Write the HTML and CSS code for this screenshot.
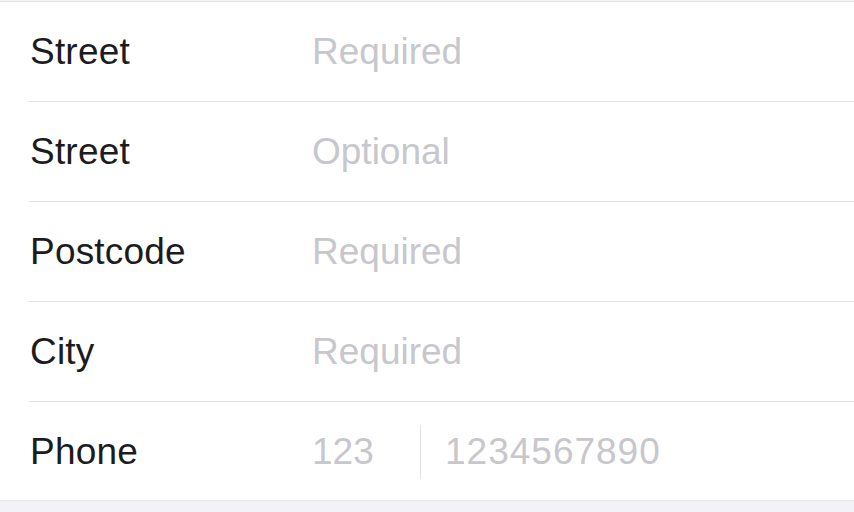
FILE: index.html
```html
<!DOCTYPE html>
<html>
<head>
<meta charset="utf-8">
<link rel="stylesheet" href="styles.css">
</head>
<body>
<div class="form">
  <div class="row">
    <div class="label">Street</div>
    <div class="value">Required</div>
  </div>
  <div class="row">
    <div class="label">Street</div>
    <div class="value">Optional</div>
  </div>
  <div class="row">
    <div class="label">Postcode</div>
    <div class="value">Required</div>
  </div>
  <div class="row">
    <div class="label">City</div>
    <div class="value">Required</div>
  </div>
  <div class="row last">
    <div class="label">Phone</div>
    <div class="value phone">
      <span class="code">123</span>
      <span class="divider"></span>
      <span class="number">1234567890</span>
    </div>
  </div>
</div>
</body>
</html>
```
FILE: styles.css
```css
html, body {
  margin: 0;
  padding: 0;
  background: #f2f2f7;
  height: 512px;
  overflow: hidden;
}
.form {
  margin-top: 1px;
  background: #ffffff;
  border-top: 1px solid #e4e4e9;
  border-bottom: 1px solid #e4e4e9;
  font-family: "Liberation Sans", Arial, sans-serif;
  font-size: 37px;
  letter-spacing: 0.2px;
}
.row {
  display: flex;
  align-items: center;
  height: 99px;
  margin-left: 29px;
  border-bottom: 1px solid #e2e2e6;
  box-sizing: content-box;
}
.row.last {
  border-bottom: none;
  height: 98px;
  padding-top: 2px;
  box-sizing: border-box;
}
.label {
  width: 282px;
  padding-left: 1px;
  color: #1c1c1e;
  flex-shrink: 0;
}
.value {
  color: #c7c7cc;
  flex: 1;
  letter-spacing: 0;
}
.phone {
  display: flex;
  align-items: center;
}
.code {
  width: 108px;
}
.divider {
  width: 1px;
  height: 54px;
  background: #e2e2e6;
  margin-right: 24px;
}
.number {
  letter-spacing: 1px;
}
```
